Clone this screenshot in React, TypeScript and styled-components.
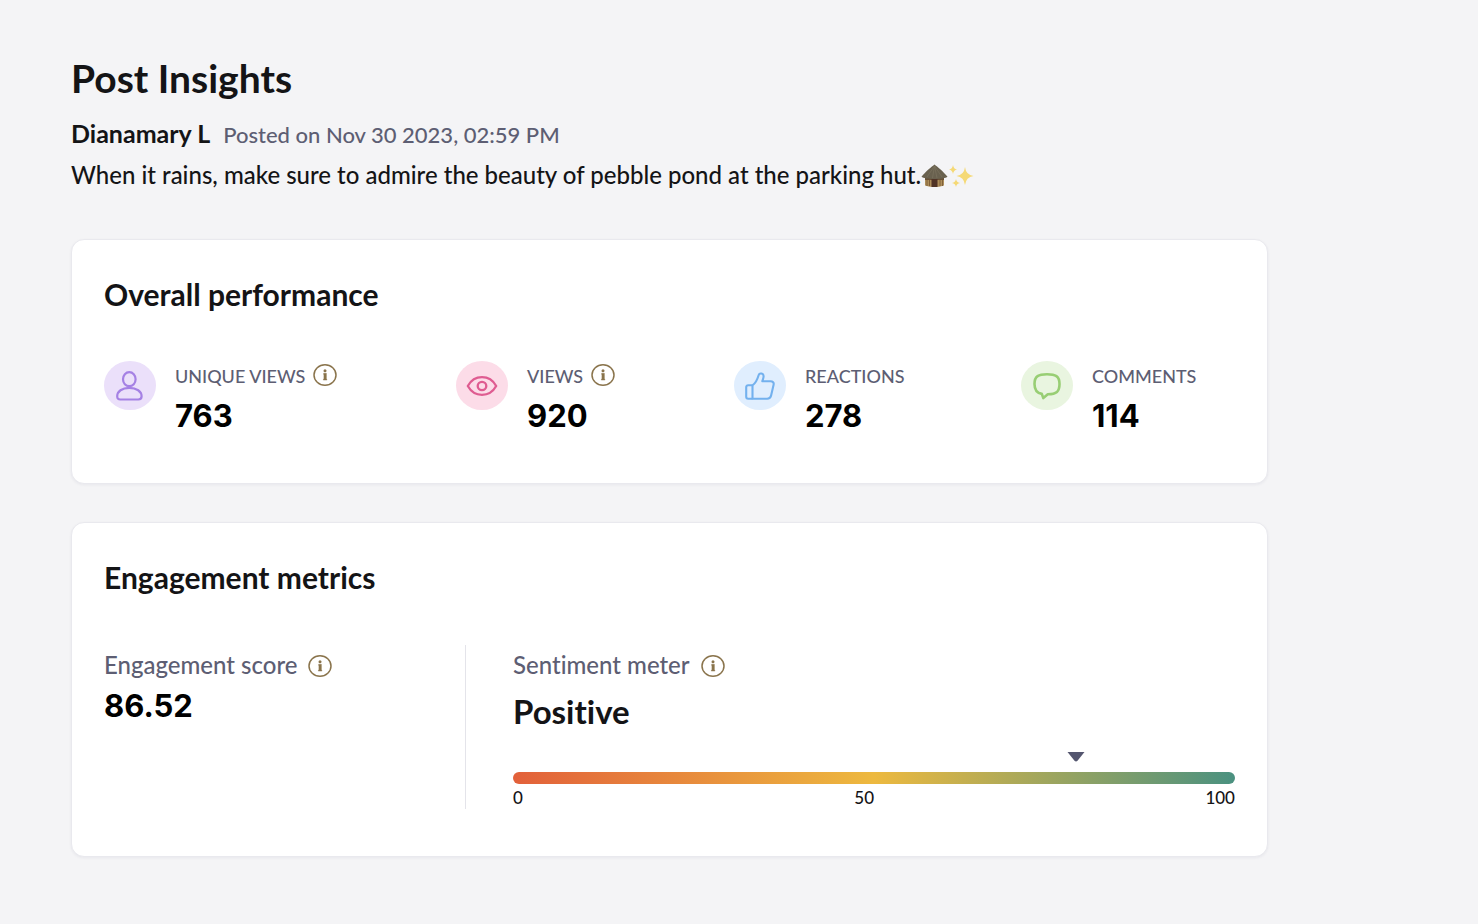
import React from "react";
import styled, { createGlobalStyle } from "styled-components";

const GlobalStyle = createGlobalStyle`
  * { box-sizing: border-box; }
  body {
    margin: 0;
    background: #f4f4f6;
    color: #141416;
    font-family: Lato, "Liberation Sans", sans-serif;
    font-weight: 500;
    font-variant-ligatures: none;
  }
  h1, h2, p, dl, dt, dd { margin: 0; }
`;

const Page = styled.main`
  max-width: 1339px;
  padding: 54px 71px 64px;
`;

const Header = styled.header`
  margin-bottom: 48px;
`;

const Title = styled.h1`
  font-size: 39px;
  line-height: 48px;
  font-weight: 700;
`;

const Byline = styled.p`
  display: flex;
  flex-wrap: wrap;
  align-items: baseline;
  gap: 13px;
  margin-top: 15px;
  font-size: 22px;
  line-height: 32px;
`;

const Author = styled.strong`
  font-size: 25px;
  font-weight: 700;
`;

const Posted = styled.time`
  color: #5d5e73;
`;

const Message = styled.p`
  margin-top: 8px;
  font-size: 24px;
  line-height: 32px;
`;

const HutIcon = styled.svg`
  width: 27px;
  height: 24px;
  vertical-align: -4px;
`;

const SparkleIcon = styled.svg`
  width: 26px;
  height: 24px;
  vertical-align: -4px;
`;

const Card = styled.section`
  padding: 34px 32px 47px;
  border: 1px solid #e9e9ee;
  border-radius: 13px;
  background: #fff;
  box-shadow: 0 1px 3px rgba(40, 40, 80, 0.06);

  & + & { margin-top: 38px; }
`;

const CardTitle = styled.h2`
  font-size: 30px;
  line-height: 40px;
  font-weight: 700;
`;

const Stats = styled.dl`
  display: grid;
  grid-template-columns: 352fr 278fr 287fr 214fr;
  margin-top: 47px;
`;

const Stat = styled.div`
  display: grid;
  grid-template-columns: 52px auto;
  grid-template-rows: 30px 45px;
  column-gap: 19px;
  justify-content: start;
`;

const Badge = styled.span<{ $bg: string; $fg: string }>`
  grid-row: 1 / span 2;
  display: flex;
  align-items: center;
  justify-content: center;
  width: 52px;
  height: 49px;
  border-radius: 50%;
  background: ${(p) => p.$bg};
  color: ${(p) => p.$fg};
`;

const InfoButton = styled.button`
  display: inline-flex;
  padding: 0;
  border: 0;
  background: none;
  color: #8a744c;
  cursor: pointer;
`;

const StatLabel = styled.dt`
  display: flex;
  align-items: center;
  gap: 8px;
  grid-column: 2;
  height: 30px;
  color: #5d5e73;
  font-size: 18px;
  white-space: nowrap;

  ${InfoButton} { margin-bottom: 2px; }
`;

const StatValue = styled.dd`
  grid-column: 2;
  color: #000;
  font-family: Inter, "Liberation Sans", sans-serif;
  font-size: 31px;
  line-height: 50px;
  font-weight: 700;
`;

const ScoreValue = styled(StatValue)`
  line-height: 46px;
`;

const Metrics = styled.div`
  display: grid;
  grid-template-columns: 362px 1fr;
  margin-top: 48px;
`;

const Score = styled.div`
  border-right: 1px solid #e4e4ea;
`;

const Sentiment = styled.div`
  padding-left: 47px;
`;

const MetricLabel = styled.div`
  display: flex;
  align-items: center;
  gap: 11px;
  height: 38px;
  color: #5d5e73;
  font-size: 24px;

  ${InfoButton} { margin-top: 4px; }
`;

const SentimentValue = styled.p`
  font-size: 33px;
  line-height: 56px;
  font-weight: 700;
`;

const Meter = styled.div`
  display: flex;
  flex-direction: column;
  margin-top: 13px;
`;

const Pointer = styled.svg`
  width: 18px;
  height: 10px;
  margin-left: calc(78% - 9px);
`;

const Bar = styled.div`
  height: 12px;
  margin-top: 10px;
  border-radius: 6px;
  background: linear-gradient(90deg, #e2603a, #edb93f 50%, #4a9180);
`;

const Scale = styled.div`
  display: flex;
  justify-content: space-between;
  margin-top: 3px;
  font-size: 17px;
  line-height: 22px;
`;

function Info({ about }: { about: string }) {
  return (
    <InfoButton type="button" aria-label={`About ${about}`}>
      <svg width="24" height="22" viewBox="0 0 24 22" fill="none" aria-hidden="true">
        <ellipse cx="12" cy="11" rx="11" ry="10.2" stroke="currentColor" strokeWidth="1.5" />
        <circle cx="12" cy="6.7" r="1.5" fill="currentColor" />
        <path d="M10.600 9.300h2.800v5.800h.4v1h-3.400v-1h.5v-4.600h-.3z" fill="currentColor" stroke="currentColor" strokeWidth=".4" />
      </svg>
    </InfoButton>
  );
}

const PersonIcon = () => (
  <svg width="28" height="30" viewBox="0 0 28 30" fill="none" stroke="currentColor" strokeWidth="2.200" aria-hidden="true">
    <ellipse cx="13.300" cy="8.200" rx="6.300" ry="7" />
    <path d="M1.200 25.300C1.200 20.500 6 16.800 13.300 16.800S25.600 20.500 25.600 25.300c0 2.300-1.300 3.200-3.300 3.200h-18C2.300 28.500 1.200 27.600 1.200 25.300z" />
  </svg>
);

const EyeIcon = () => (
  <svg width="32" height="22" viewBox="0 0 32 22" fill="none" stroke="currentColor" strokeWidth="2.300" aria-hidden="true">
    <path d="M1.800 11C5 5.300 10.200 2.200 16 2.200S27 5.300 30.200 11C27 16.700 21.800 19.800 16 19.800S5 16.700 1.800 11z" strokeLinejoin="round" />
    <ellipse cx="16" cy="11" rx="4.300" ry="4.100" />
  </svg>
);

const ThumbIcon = () => (
  <svg width="30" height="28" viewBox="0 0 30 28" fill="none" stroke="currentColor" strokeWidth="2.100" strokeLinejoin="round" aria-hidden="true">
    <path d="M7.500 13.300H3.200c-1.200 0-2 .8-2 2v9.400c0 1.300.8 2 2 2h4.300" />
    <path d="M7.500 13.300c2.800-1.800 4.800-5.600 6.200-10.300.7-2.500 5-1.800 4.900 1.200 0 2-.7 3.500-1.300 5h8.200c2.300 0 3.600 1.500 3.100 3.500l-2.500 10.700c-.5 2.200-1.700 3.300-3.900 3.300H7.500z" />
  </svg>
);

const BubbleIcon = () => (
  <svg width="28" height="28" viewBox="0 0 28 28" fill="none" stroke="currentColor" strokeWidth="2.600" strokeLinejoin="round" aria-hidden="true">
    <path d="M14 2.200C5.600 2.200 1.500 4 1.500 12c0 6.200 2.500 9.100 7.300 9.900l1.500 4.200 4.500-3.800C23.500 22.200 26.500 19.700 26.500 12 26.500 4 22.400 2.200 14 2.200z" />
  </svg>
);

const stats = [
  { label: "UNIQUE VIEWS", value: 763, info: true, bg: "#ebe0fa", fg: "#a581e4", icon: <PersonIcon /> },
  { label: "VIEWS", value: 920, info: true, bg: "#fcdce8", fg: "#df5c91", icon: <EyeIcon /> },
  { label: "REACTIONS", value: 278, info: false, bg: "#e0eefe", fg: "#73b1ee", icon: <ThumbIcon /> },
  { label: "COMMENTS", value: 114, info: false, bg: "#e9f5e0", fg: "#98ce74", icon: <BubbleIcon /> },
];

export default function App() {
  return (
    <>
      <GlobalStyle />
      <Page>
        <Header>
          <Title>Post Insights</Title>
          <Byline>
            <Author>Dianamary L</Author>
            <Posted dateTime="2023-11-30T14:59">Posted on Nov 30 2023, 02:59 PM</Posted>
          </Byline>
          <Message>
            When it rains, make sure to admire the beauty of pebble pond at the parking hut.
            <HutIcon viewBox="0 0 27 24" role="img" aria-label="hut">
              <path d="M4 12h19v9.500q-9.500 3-19 0z" fill="#ad8e5a" />
              <path d="M4 13h19v3H4z" fill="#695136" />
              <path d="M10.500 15h6v8h-6z" fill="#513326" />
              <path d="M6 16v6M8.500 16v6M19 16v6M21.500 16v6" stroke="#806039" />
              <path d="M13.500.5C11 2.500 4 8 .5 12.800c3 3 23 3 26 0C23 8 16 2.500 13.500.5z" fill="#69614f" />
              <path d="M13.500 2L6 13M13.500 2l-2 12M13.500 2L16 14M13.500 2L21 13" stroke="#7b725e" strokeWidth=".7" />
            </HutIcon>
            <SparkleIcon viewBox="0 0 26 24" role="img" aria-label="sparkles" fill="#f5d976">
              <path d="M17 3q1 8 8.500 9-7.500 1-8.500 9-1-8-8.500-9Q16 11 17 3z" />
              <path d="M5 1q.6 4 4 4.500Q5.600 6 5 10 4.400 6 1 5.500 4.400 5 5 1zM8 15q.6 3.500 4 4-3.400.6-4 4-.6-3.400-4-4 3.400-.5 4-4z" />
            </SparkleIcon>
          </Message>
        </Header>

        <Card aria-labelledby="performance">
          <CardTitle id="performance">Overall performance</CardTitle>
          <Stats>
            {stats.map((s) => (
              <Stat key={s.label}>
                <Badge $bg={s.bg} $fg={s.fg}>{s.icon}</Badge>
                <StatLabel>
                  {s.label}
                  {s.info && <Info about={s.label.toLowerCase()} />}
                </StatLabel>
                <StatValue>{s.value}</StatValue>
              </Stat>
            ))}
          </Stats>
        </Card>

        <Card aria-labelledby="engagement">
          <CardTitle id="engagement">Engagement metrics</CardTitle>
          <Metrics>
            <Score>
              <MetricLabel>
                Engagement score
                <Info about="engagement score" />
              </MetricLabel>
              <ScoreValue as="p">86.52</ScoreValue>
            </Score>
            <Sentiment>
              <MetricLabel>
                Sentiment meter
                <Info about="sentiment meter" />
              </MetricLabel>
              <SentimentValue>Positive</SentimentValue>
              <Meter role="meter" aria-label="Sentiment" aria-valuemin={0} aria-valuemax={100} aria-valuenow={78}>
                <Pointer viewBox="0 0 18 10" aria-hidden="true">
                  <path d="M.5 0h17L10.500 8.800q-1.500 1.500-3 0z" fill="#54566f" />
                </Pointer>
                <Bar />
                <Scale>
                  <span>0</span>
                  <span>50</span>
                  <span>100</span>
                </Scale>
              </Meter>
            </Sentiment>
          </Metrics>
        </Card>
      </Page>
    </>
  );
}
